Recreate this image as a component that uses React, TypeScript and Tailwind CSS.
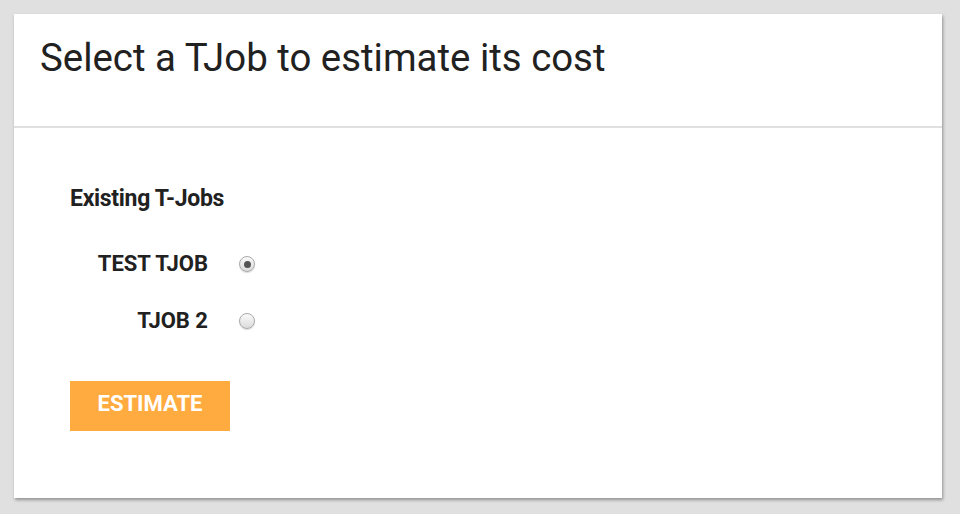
import React from "react";

function Radio({ checked }: { checked: boolean }) {
  return (
    <span className="relative inline-flex h-[16px] w-[16px] items-center justify-center rounded-full border border-[#a9a9a9] bg-gradient-to-b from-[#fafafa] to-[#dcdcdc] shadow-[0_1px_1px_rgba(0,0,0,0.15)]">
      {checked && <span className="h-[7px] w-[7px] rounded-full bg-[#555]" />}
    </span>
  );
}

export default function App() {
  return (
    <div className="min-h-[514px] bg-[#e0e0e0] pt-[14px] pl-[14px] pr-[18px] pb-[17px] font-['Roboto',sans-serif] text-[#212121]">
      <div className="bg-white shadow-[1px_2px_3px_rgba(0,0,0,0.35)]">
        <div className="h-[114px] border-b-2 border-[#e0e0e0] px-[26px] pt-[20px]">
          <h1 className="text-[38.4px] leading-[48px] font-normal">Select a TJob to estimate its cost</h1>
        </div>
        <div className="px-[56px] pt-[59px] pb-[67px]">
          <div className="text-[23px] font-bold leading-[24px] tracking-[-0.3px]">Existing T-Jobs</div>
          <div className="mt-[41px] flex flex-col gap-[33px]">
            <div className="flex h-[24px] items-center">
              <span className="w-[138px] text-right text-[22px] font-bold leading-[24px]">TEST TJOB</span>
              <span className="ml-[31px] flex"><Radio checked /></span>
            </div>
            <div className="flex h-[24px] items-center">
              <span className="w-[138px] text-right text-[22px] font-bold leading-[24px]">TJOB 2</span>
              <span className="ml-[31px] flex"><Radio checked={false} /></span>
            </div>
          </div>
          <button className="mt-[48px] flex h-[50px] w-[160px] items-center justify-center bg-[#ffab40] pb-[5px] text-[22px] font-bold text-white">
            ESTIMATE
          </button>
        </div>
      </div>
    </div>
  );
}
